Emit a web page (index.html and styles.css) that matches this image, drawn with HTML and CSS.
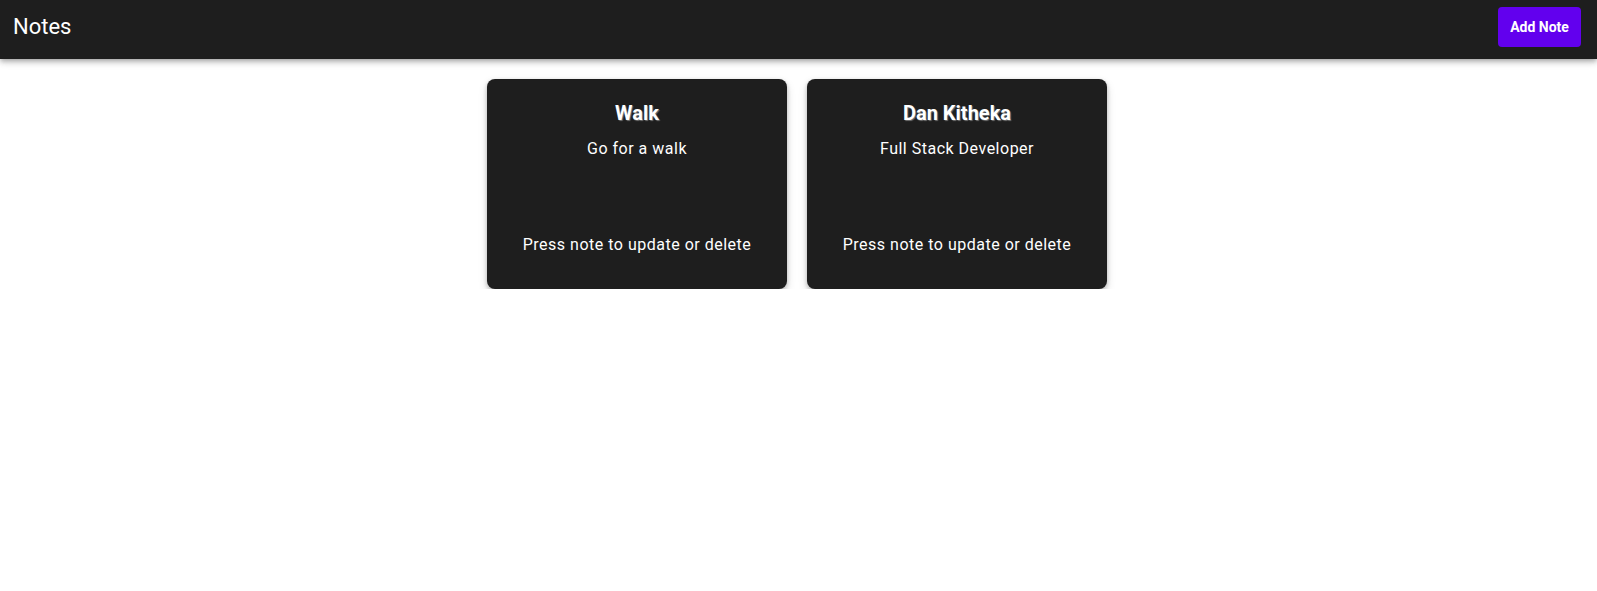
FILE: index.html
```html
<!DOCTYPE html>
<html lang="en">
<head>
<meta charset="utf-8">
<title>Notes</title>
<link rel="stylesheet" href="styles.css">
</head>
<body>
<header class="appbar">
  <h1 class="appbar-title">Notes</h1>
  <button class="add-btn">Add Note</button>
</header>
<main class="notes">
  <div class="note">
    <h2 class="note-title">Walk</h2>
    <p class="note-body">Go for a walk</p>
    <p class="note-hint">Press note to update or delete</p>
  </div>
  <div class="note">
    <h2 class="note-title">Dan Kitheka</h2>
    <p class="note-body">Full Stack Developer</p>
    <p class="note-hint">Press note to update or delete</p>
  </div>
</main>
</body>
</html>
```

FILE: styles.css
```css
* { box-sizing: border-box; }
html, body { margin: 0; padding: 0; background: #ffffff; }
body { font-family: Roboto, "Liberation Sans", sans-serif; }

.appbar {
  height: 59px;
  background: #1e1e1e;
  display: flex;
  align-items: center;
  justify-content: space-between;
  padding: 0 16px 5px 13px;
  box-shadow: 0 2px 4px -1px rgba(0,0,0,0.2), 0 4px 5px 0 rgba(0,0,0,0.14), 0 1px 10px 0 rgba(0,0,0,0.12);
  position: relative;
  z-index: 1;
}
.appbar-title {
  margin: 0;
  color: #ffffff;
  font-size: 22px;
  font-weight: 400;
  line-height: 30px;
}
.add-btn {
  height: 40px;
  width: 83px;
  padding: 0;
  border: none;
  border-radius: 4px;
  background: #6200ee;
  color: #ffffff;
  font-family: Roboto, "Liberation Sans", sans-serif;
  font-size: 14px;
  font-weight: 700;
}

.notes {
  display: flex;
  justify-content: center;
  gap: 20px;
  padding: 20px 3px 0 0;
}
.note {
  width: 300px;
  height: 210px;
  background: #1e1e1e;
  border-radius: 8px;
  color: #ffffff;
  text-align: center;
  display: flex;
  flex-direction: column;
  padding: 20px 12px 32px;
  box-shadow: 0 2px 4px rgba(0,0,0,0.22), 0 4px 10px rgba(0,0,0,0.14);
}
.note-title {
  margin: 0;
  font-size: 20px;
  line-height: 28px;
  font-weight: 700;
  text-shadow: 1px 1px 1px rgba(150,150,150,0.7);
}
.note-body {
  margin: 10px 0 0;
  font-size: 16px;
  line-height: 24px;
  letter-spacing: 0.5px;
}
.note-hint {
  margin: auto 0 0;
  font-size: 16px;
  line-height: 24px;
  letter-spacing: 0.5px;
}
```
